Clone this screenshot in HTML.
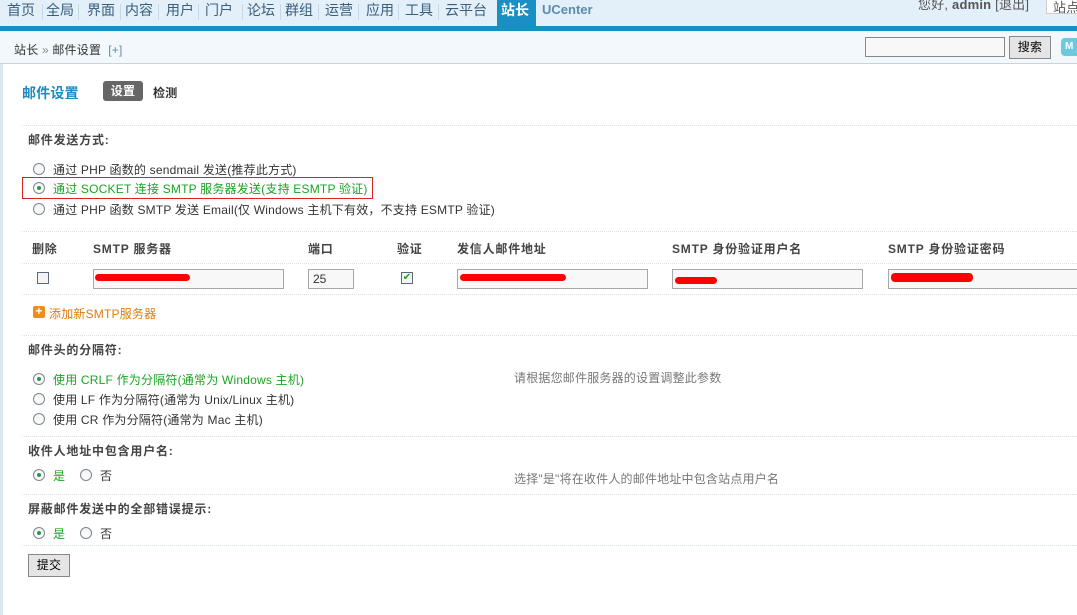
<!DOCTYPE html>
<html><head><meta charset="utf-8"><style>
*{margin:0;padding:0;box-sizing:border-box}
body{width:1077px;height:615px;overflow:hidden;background:#fff;font-family:"Liberation Sans","Noto Sans CJK SC",sans-serif;font-size:12px;color:#333;position:relative}
.a{position:absolute;white-space:nowrap;letter-spacing:0.2px}
#top{position:absolute;left:0;top:0;width:1077px;height:27px;background:#e3eff9}
#bar{position:absolute;left:0;top:26px;width:1077px;height:5px;background:#1491c3}
.nav{position:absolute;top:0;height:26px;line-height:20px;font-size:14px;color:#3a5f7d;padding:0 3px}
.sep{position:absolute;top:4px;width:1px;height:16px;background:#c5d8e6}
#crumb{position:absolute;left:0;top:31px;width:1077px;height:33px;background:#f2f8fc;border-bottom:1px solid #c8d3dc}
.dl{position:absolute;left:22px;width:1055px;height:0;border-top:1px dotted #d8e0e6}
.r{position:absolute;width:12px;height:12px;border:1px solid #7a8591;border-radius:50%;background:linear-gradient(#f3f3f3,#fff)}
.r.on::after{content:"";position:absolute;left:3px;top:3px;width:4px;height:4px;border-radius:50%;background:#2a9a44}
.g{color:#1aa524}
.b{font-weight:bold}
.in{position:absolute;top:269px;height:20px;border:1px solid #a8a8a8;background:#f8f8f8}
.red{position:absolute;height:7px;background:#f00;border-radius:4px}
.hd{font-weight:bold;color:#444;letter-spacing:0.8px}
</style></head><body>
<div id="top"></div>
<div class="nav" style="left:4px">首页</div><div class="sep" style="left:42px"></div>
<div class="nav" style="left:43px">全局</div><div class="sep" style="left:78px"></div>
<div class="nav" style="left:84px">界面</div><div class="sep" style="left:120px"></div>
<div class="nav" style="left:122px">内容</div><div class="sep" style="left:158px"></div>
<div class="nav" style="left:163px">用户</div><div class="sep" style="left:198px"></div>
<div class="nav" style="left:202px">门户</div><div class="sep" style="left:242px"></div>
<div class="nav" style="left:244px">论坛</div><div class="sep" style="left:280px"></div>
<div class="nav" style="left:282px">群组</div><div class="sep" style="left:318px"></div>
<div class="nav" style="left:322px">运营</div><div class="sep" style="left:358px"></div>
<div class="nav" style="left:363px">应用</div><div class="sep" style="left:398px"></div>
<div class="nav" style="left:402px">工具</div><div class="sep" style="left:438px"></div>
<div class="nav" style="left:442px">云平台</div>
<div class="nav" style="left:497px;width:39px;background:#1a8fc3;color:#fff;font-weight:bold;padding:0 4px;height:27px">站长</div>
<div class="nav" style="left:539px;font-weight:bold;font-size:13px;color:#5a8cb0">UCenter</div>
<div class="a" style="left:918px;top:-6px;font-size:13px;color:#555">您好, <b>admin</b> [退出]</div>
<div class="a" style="left:1046px;top:-4px;width:40px;height:18px;border:1px solid #ccc;background:#fff;font-size:13px;padding-left:6px;color:#555">站点</div>
<div id="bar"></div>
<div id="crumb"></div>
<div class="a" style="left:14px;top:41px;color:#333">站长 <span style="color:#888">»</span> 邮件设置 &nbsp;<span style="color:#5a8cb0">[+]</span></div>
<div class="a" style="left:865px;top:37px;width:140px;height:20px;border:1px solid #888;background:#f8f8f8"></div>
<div class="a" style="left:1009px;top:36px;width:42px;height:23px;border:1px solid #888;background:#e5e5e5;text-align:center;line-height:21px;color:#000">搜索</div>
<div class="a" style="left:1061px;top:38px;width:20px;height:18px;border-radius:4px;background:#6cc9de;color:#fff;font-size:10px;font-weight:bold;line-height:18px;padding-left:4px">M</div>
<div class="a" style="left:0;top:64px;width:3px;height:551px;background:#dbe8f3"></div>
<div class="a" style="left:22px;top:83px;font-size:14px;font-weight:bold;color:#1d8ac0">邮件设置</div>
<div class="a" style="left:103px;top:81px;width:40px;height:20px;background:#666;color:#fff;border-radius:3px;font-weight:bold;text-align:center;line-height:20px">设置</div>
<div class="a b" style="left:153px;top:84px">检测</div>
<div class="dl" style="top:125px"></div>
<div class="a hd" style="left:28px;top:131px">邮件发送方式:</div>
<div class="r" style="left:33px;top:163px"></div><div class="a" style="left:53px;top:161px">通过 PHP 函数的 sendmail 发送(推荐此方式)</div>
<div class="a" style="left:22px;top:177px;width:351px;height:22px;border:1px solid #d22"></div>
<div class="r on" style="left:33px;top:182px"></div><div class="a g" style="left:53px;top:180px">通过 SOCKET 连接 SMTP 服务器发送(支持 ESMTP 验证)</div>
<div class="r" style="left:33px;top:203px"></div><div class="a" style="left:53px;top:201px">通过 PHP 函数 SMTP 发送 Email(仅 Windows 主机下有效，不支持 ESMTP 验证)</div>
<div class="dl" style="top:231px"></div>
<div class="a hd" style="left:32px;top:240px">删除</div>
<div class="a hd" style="left:93px;top:240px">SMTP 服务器</div>
<div class="a hd" style="left:308px;top:240px">端口</div>
<div class="a hd" style="left:397px;top:240px">验证</div>
<div class="a hd" style="left:457px;top:240px">发信人邮件地址</div>
<div class="a hd" style="left:672px;top:240px">SMTP 身份验证用户名</div>
<div class="a hd" style="left:888px;top:240px">SMTP 身份验证密码</div>
<div class="dl" style="top:263px"></div>
<div class="a" style="left:37px;top:272px;width:12px;height:12px;border:1px solid #5a6a7a;background:#f4f4f4"></div>
<div class="in" style="left:93px;width:191px"></div><div class="red" style="left:95px;top:274px;width:95px"></div>
<div class="in" style="left:308px;width:46px;padding-left:4px;line-height:18px;color:#333">25</div>
<div class="a" style="left:401px;top:272px;width:12px;height:12px;border:1px solid #5a6a7a;background:#f4f4f4;color:#1aa524;font-size:10px;line-height:10px;text-align:center">✔</div>
<div class="in" style="left:457px;width:191px"></div><div class="red" style="left:460px;top:274px;width:106px"></div>
<div class="in" style="left:672px;width:191px"></div><div class="red" style="left:675px;top:277px;width:42px"></div>
<div class="in" style="left:888px;width:200px"></div><div class="red" style="left:891px;top:273px;width:82px;height:9px"></div>
<div class="dl" style="top:294px"></div>
<div class="a" style="left:33px;top:306px;width:12px;height:12px;background:#f08c1a;border-radius:2px;color:#fff;font-size:12px;line-height:11px;text-align:center;font-weight:bold">+</div>
<div class="a" style="left:49px;top:305px;color:#e07a10">添加新SMTP服务器</div>
<div class="dl" style="top:335px"></div>
<div class="a hd" style="left:28px;top:341px">邮件头的分隔符:</div>
<div class="r on" style="left:33px;top:373px"></div><div class="a g" style="left:53px;top:371px">使用 CRLF 作为分隔符(通常为 Windows 主机)</div>
<div class="a" style="left:514px;top:369px;color:#777">请根据您邮件服务器的设置调整此参数</div>
<div class="r" style="left:33px;top:393px"></div><div class="a" style="left:53px;top:391px">使用 LF 作为分隔符(通常为 Unix/Linux 主机)</div>
<div class="r" style="left:33px;top:413px"></div><div class="a" style="left:53px;top:411px">使用 CR 作为分隔符(通常为 Mac 主机)</div>
<div class="dl" style="top:436px"></div>
<div class="a hd" style="left:28px;top:442px">收件人地址中包含用户名:</div>
<div class="r on" style="left:33px;top:469px"></div><div class="a g" style="left:53px;top:467px">是</div>
<div class="r" style="left:80px;top:469px"></div><div class="a" style="left:100px;top:467px">否</div>
<div class="a" style="left:514px;top:470px;color:#777">选择"是"将在收件人的邮件地址中包含站点用户名</div>
<div class="dl" style="top:494px"></div>
<div class="a hd" style="left:28px;top:500px">屏蔽邮件发送中的全部错误提示:</div>
<div class="r on" style="left:33px;top:527px"></div><div class="a g" style="left:53px;top:525px">是</div>
<div class="r" style="left:80px;top:527px"></div><div class="a" style="left:100px;top:525px">否</div>
<div class="dl" style="top:545px"></div>
<div class="a" style="left:28px;top:554px;width:42px;height:23px;border:1px solid #888;background:#e5e5e5;text-align:center;line-height:21px;color:#000">提交</div>
</body></html>
